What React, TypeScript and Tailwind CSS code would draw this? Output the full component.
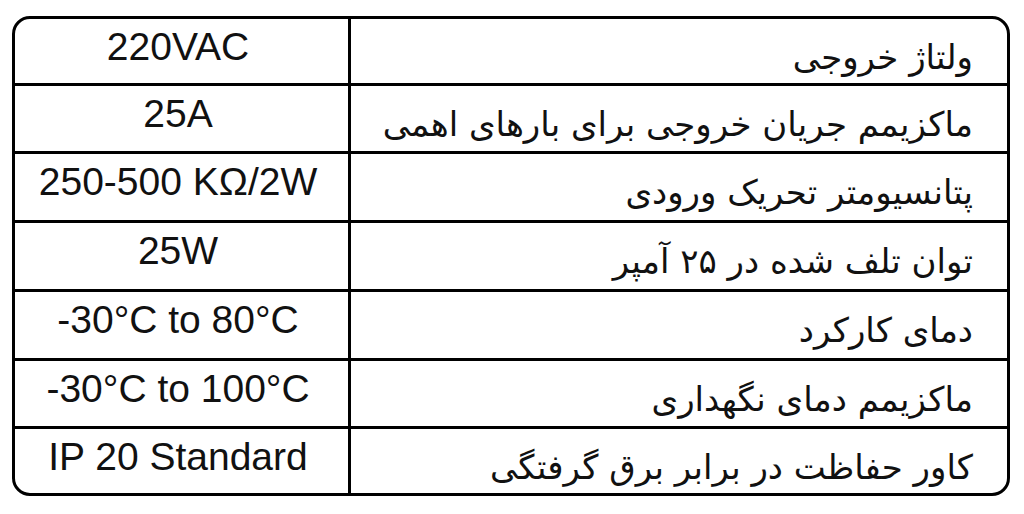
import React from "react";

const rows: { v: string; fa: string; h: string }[] = [
  { v: "220VAC", fa: "ولتاژ خروجی", h: "h-[64px]" },
  { v: "25A", fa: "ماکزیمم جریان خروجی برای بارهای اهمی", h: "h-[65px]" },
  { v: "250-500 KΩ/2W", fa: "پتانسیومتر تحریک ورودی", h: "h-[66px]" },
  { v: "25W", fa: "توان تلف شده در ۲۵ آمپر", h: "h-[66px]" },
  { v: "-30°C to 80°C", fa: "دمای کارکرد", h: "h-[66px]" },
  { v: "-30°C to 100°C", fa: "ماکزیمم دمای نگهداری", h: "h-[65px]" },
  { v: "IP 20 Standard", fa: "کاور حفاظت در برابر برق گرفتگی", h: "h-[64px]" },
];

export default function App() {
  return (
    <div className="w-[1024px] h-[514px] bg-white pt-[16px] pl-[12px]">
      <div className="w-[998px] h-[480px] border-[3px] border-black rounded-[18px] overflow-hidden flex flex-col">
        {rows.map((r, i) => (
          <div
            key={i}
            className={`flex ${r.h} ${i < rows.length - 1 ? "border-b-[3px] border-black" : ""} box-content`}
          >
            <div className="w-[326px] pr-[7px] border-r-[3px] border-black flex justify-center pt-[8px] box-content">
              <span
                className="text-[39px] leading-[39px] text-[#111] whitespace-nowrap"
                style={{ fontFamily: '"Liberation Sans", Arial, sans-serif' }}
              >
                {r.v}
              </span>
            </div>
            <div dir="rtl" className="flex-1 flex justify-start pr-[34px] pt-[21px]">
              <span
                className="text-[34px] leading-[34px] text-[#111] whitespace-nowrap"
                style={{ fontFamily: '"DejaVu Sans", sans-serif' }}
              >
                {r.fa}
              </span>
            </div>
          </div>
        ))}
      </div>
    </div>
  );
}
